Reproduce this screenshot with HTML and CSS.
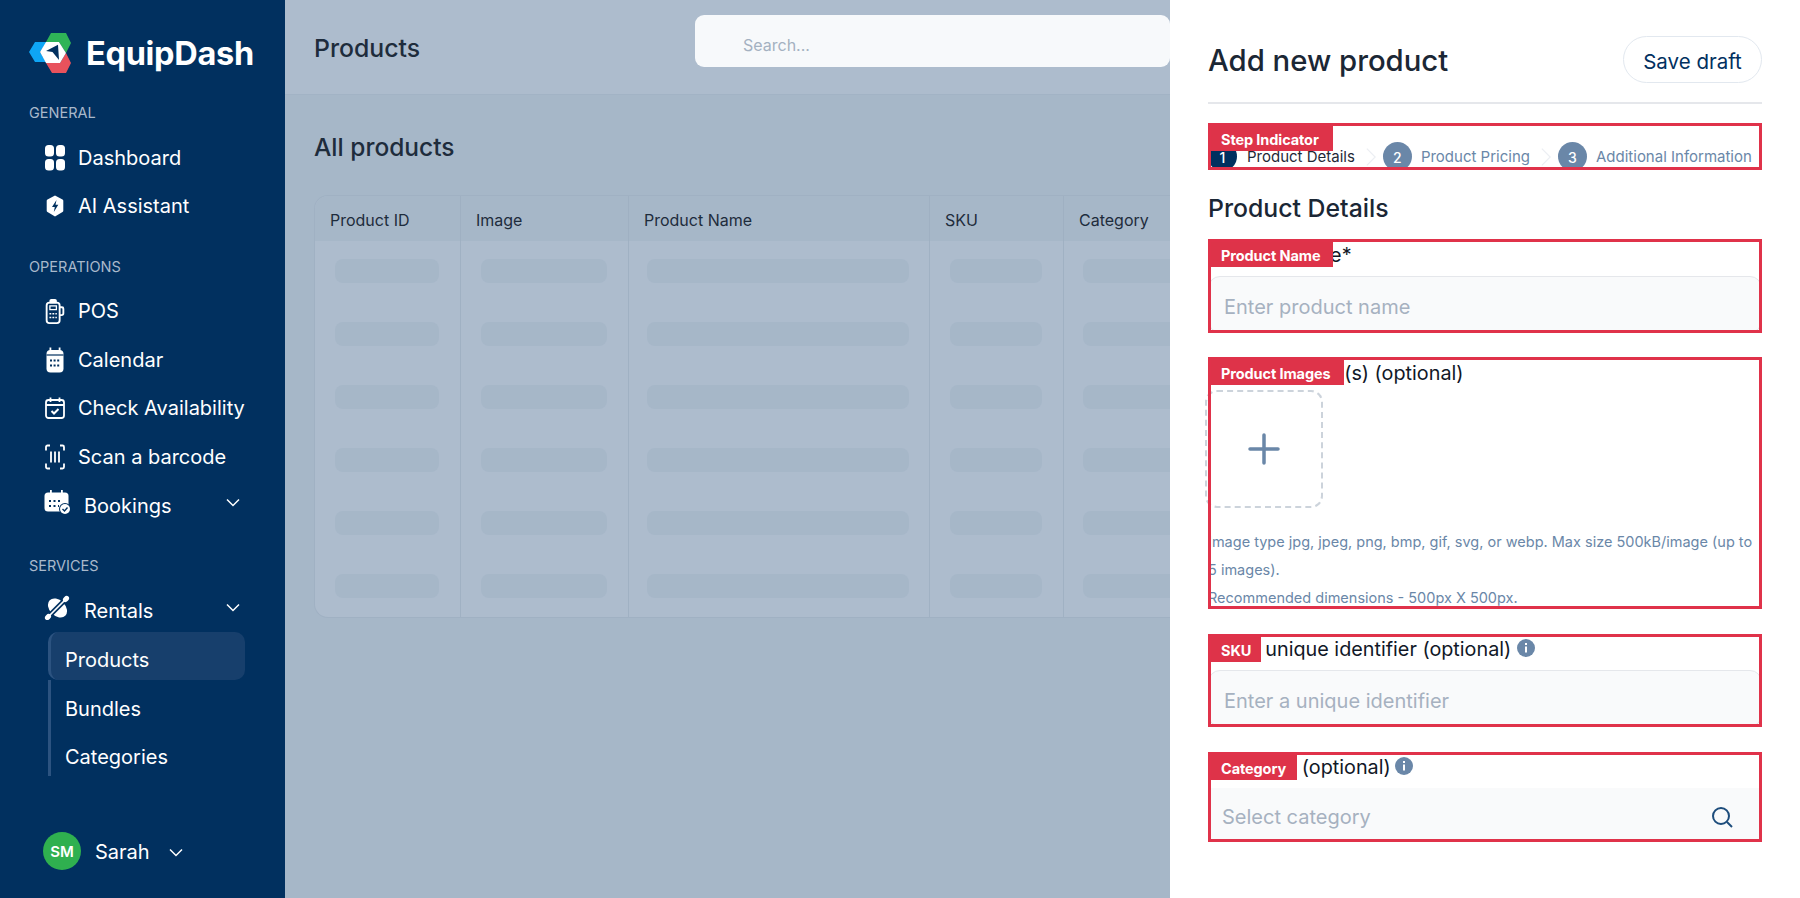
FILE: index.html
```html
<!DOCTYPE html>
<html lang="en">
<head>
<meta charset="utf-8">
<title>EquipDash - Add new product</title>
<link rel="stylesheet" href="styles.css">
</head>
<body>
<div class="app">
  <aside class="sidebar">
    <div class="brand">
      <svg class="logo" viewBox="29 32 42 42" width="42" height="42">
        <polygon fill="#0ea5f5" points="29,52 35,42 47,42 40,52 46,62 35,62"/>
        <polygon fill="#2fb457" points="51,33 66,33 71,43 66,53 59,42 46,42"/>
        <polygon fill="#e8525c" points="66,53 71,63 66,73 52,73 46,63 60,63"/>
        <polygon fill="#ffffff" points="40,52 46,42 59,42 66,53 60,63 46,63"/>
        <polygon fill="#01305f" points="46,51 58,44.700 59,60 52.500,52"/>
      </svg>
      <span class="brand-name">EquipDash</span>
    </div>

    <div class="nav-heading first">GENERAL</div>
    <a class="nav-item">
      <svg class="nav-icon" viewBox="0 0 20 26"><rect x="0" y="0" width="9" height="11.5" rx="3.5" fill="#fff"/><rect x="11" y="0" width="9" height="11.5" rx="3.5" fill="#fff"/><rect x="0" y="14" width="9" height="11.5" rx="3.5" fill="#fff"/><rect x="11" y="14" width="9" height="11.5" rx="3.5" fill="#fff"/></svg>
      <span>Dashboard</span>
    </a>
    <a class="nav-item">
      <svg class="nav-icon" viewBox="0 0 20 24"><path fill="#fff" d="M10 1.5 17.5 5.500a1.500 1.500 0 0 1 .8 1.300v10a1.500 1.500 0 0 1-.8 1.300L10 22.500 2.500 18.100a1.500 1.500 0 0 1-.8-1.300v-10a1.500 1.500 0 0 1 .8-1.300Z"/><path fill="#01305f" d="M11.500 6 7 13h2.800L8.800 18 13.300 10.800h-2.800Z"/></svg>
      <span>AI Assistant</span>
    </a>

    <div class="nav-heading">OPERATIONS</div>
    <div class="nav-list">
      <a class="nav-item">
        <svg class="nav-icon" viewBox="0 0 20 28" fill="none" stroke="#fff" stroke-width="2"><rect x="1" y="5" width="14" height="22" rx="3"/><path d="M15 10h2.500a1.500 1.500 0 0 1 1.500 1.500v5a2 2 0 0 1-2 2h-2"/><path fill="#fff" stroke="none" d="M4 6V3a2 2 0 0 1 2-2h4a2 2 0 0 1 2 2v3Z"/><rect x="4.500" y="8.500" width="7" height="4" stroke-width="1.400"/><path stroke-width="1.800" stroke-dasharray="2 1.200" d="M4 17h8M4 21h8"/></svg>
        <span>POS</span>
      </a>
      <a class="nav-item">
        <svg class="nav-icon" viewBox="0 0 20 26"><rect x="1.500" y="3" width="17" height="22.500" rx="4" fill="#fff"/><rect x="4.500" y="0.500" width="1.800" height="5" fill="#fff"/><rect x="13.700" y="0.500" width="1.800" height="5" fill="#fff"/><path stroke="#01305f" stroke-width="1.200" d="M1.500 8h17"/><path stroke="#01305f" stroke-width="2" stroke-dasharray="2 1.600" d="M5 13.500h10M5 18.500h10"/></svg>
        <span>Calendar</span>
      </a>
      <a class="nav-item">
        <svg class="nav-icon" viewBox="0 0 20 22" fill="none" stroke="#fff" stroke-width="1.800"><rect x="1" y="3" width="18" height="18" rx="2.500"/><path d="M1 8h18M5.500 0.500v4.500M14.500 0.500v4.500"/><path stroke-width="2" d="m6.500 14 2.500 2.500 4.500-4.500"/></svg>
        <span>Check Availability</span>
      </a>
      <a class="nav-item">
        <svg class="nav-icon" viewBox="0 0 20 25" fill="none" stroke="#fff" stroke-width="1.800"><path d="M5 1H2.500A1.500 1.500 0 0 0 1 2.500V6M15 1h2.500A1.500 1.500 0 0 1 19 2.500V6M5 24H2.500A1.500 1.500 0 0 1 1 22.500V19M15 24h2.500a1.500 1.500 0 0 0 1.500-1.500V19M6 7v11M10 7v11M14 7v11"/></svg>
        <span>Scan a barcode</span>
      </a>
      <a class="nav-item wide">
        <svg class="nav-icon-lg" viewBox="0 0 27 25"><rect x="0.500" y="2.500" width="24" height="19" rx="3.500" fill="#fff"/><rect x="6" y="0" width="1.800" height="4" fill="#fff"/><rect x="17" y="0" width="1.800" height="4" fill="#fff"/><path stroke="#01305f" stroke-width="2" stroke-dasharray="2 2.500" d="M5 11h13M5 16h10"/><circle cx="21" cy="19" r="6" fill="#01305f"/><circle cx="21" cy="19" r="5" fill="#fff"/><path fill="none" stroke="#01305f" stroke-width="1.400" d="m18.500 19 2 2 3-3.500"/></svg>
        <span>Bookings</span>
        <svg class="chev" viewBox="0 0 14 9"><path d="M1 1.500 7 7.500l6-6"/></svg>
      </a>
    </div>

    <div class="nav-heading services">SERVICES</div>
    <a class="nav-item wide rentals">
      <svg class="nav-icon-lg" viewBox="0 0 27 25"><ellipse cx="13.500" cy="13" rx="11" ry="7.800" transform="rotate(45 13.500 13)" fill="#fff"/><path stroke="#01305f" stroke-width="5" d="M3 23 23 3"/><path stroke="#fff" stroke-width="1.700" d="M3 23 23 3"/><ellipse cx="4" cy="22" rx="2.600" ry="3.400" transform="rotate(45 4 22)" fill="#fff"/><ellipse cx="22" cy="4" rx="2.600" ry="3.400" transform="rotate(45 22 4)" fill="#fff"/></svg>
      <span>Rentals</span>
      <svg class="chev" viewBox="0 0 14 9"><path d="M1 1.500 7 7.500l6-6"/></svg>
    </a>
    <div class="subnav">
      <a class="sub-item active">Products</a>
      <a class="sub-item">Bundles</a>
      <a class="sub-item">Categories</a>
    </div>

    <div class="user">
      <span class="avatar">SM</span>
      <span class="user-name">Sarah</span>
      <svg class="chev small" viewBox="0 0 14 9"><path d="M1 1.500 7 7.500l6-6"/></svg>
    </div>
  </aside>

  <main class="main">
    <header class="topbar">
      <h1 class="page-title">Products</h1>
      <div class="search">Search...</div>
    </header>
    <section class="content">
      <h2 class="section-title">All products</h2>
      <div class="table">
        <div class="th">Product ID</div><div class="th">Image</div><div class="th">Product Name</div><div class="th">SKU</div><div class="th">Category</div>
        <div class="td"><i class="sk"></i></div><div class="td"><i class="sk"></i></div><div class="td"><i class="sk"></i></div><div class="td"><i class="sk"></i></div><div class="td"><i class="sk"></i></div>
        <div class="td"><i class="sk"></i></div><div class="td"><i class="sk"></i></div><div class="td"><i class="sk"></i></div><div class="td"><i class="sk"></i></div><div class="td"><i class="sk"></i></div>
        <div class="td"><i class="sk"></i></div><div class="td"><i class="sk"></i></div><div class="td"><i class="sk"></i></div><div class="td"><i class="sk"></i></div><div class="td"><i class="sk"></i></div>
        <div class="td"><i class="sk"></i></div><div class="td"><i class="sk"></i></div><div class="td"><i class="sk"></i></div><div class="td"><i class="sk"></i></div><div class="td"><i class="sk"></i></div>
        <div class="td"><i class="sk"></i></div><div class="td"><i class="sk"></i></div><div class="td"><i class="sk"></i></div><div class="td"><i class="sk"></i></div><div class="td"><i class="sk"></i></div>
        <div class="td"><i class="sk"></i></div><div class="td"><i class="sk"></i></div><div class="td"><i class="sk"></i></div><div class="td"><i class="sk"></i></div><div class="td"><i class="sk"></i></div>
      </div>
    </section>
  </main>

  <aside class="panel">
    <div class="panel-head">
      <h2 class="panel-title">Add new product</h2>
      <button class="draft">Save draft</button>
    </div>

    <div class="annot steps-box">
      <div class="steps">
        <span class="step-num current">1</span><span class="step-text current">Product Details</span>
        <svg class="step-sep" viewBox="0 0 12 22"><path d="M1 1l10 10L1 21"/></svg>
        <span class="step-num">2</span><span class="step-text">Product Pricing</span>
        <svg class="step-sep" viewBox="0 0 12 22"><path d="M1 1l10 10L1 21"/></svg>
        <span class="step-num">3</span><span class="step-text">Additional Information</span>
      </div>
      <span class="tag tag-step">Step Indicator</span>
    </div>

    <h3 class="form-title">Product Details</h3>

    <div class="annot name-box">
      <div class="field-label">Product Name*</div>
      <div class="input">Enter product name</div>
      <span class="tag tag-name">Product Name</span>
    </div>

    <div class="annot images-box">
      <div class="field-label">Product Image(s) (optional)</div>
      <div class="upload">
        <svg class="plus" viewBox="0 0 32 32"><path d="M16 2v28M2 16h28"/></svg>
      </div>
      <p class="hint">Image type jpg, jpeg, png, bmp, gif, svg, or webp. Max size 500kB/image (up to<br>5 images).<br>Recommended dimensions - 500px X 500px.</p>
      <span class="tag tag-images">Product Images</span>
    </div>

    <div class="annot sku-box">
      <div class="field-label">SKU unique identifier (optional)
        <svg class="info" viewBox="0 0 18 18"><circle cx="9" cy="9" r="9" fill="#6a87a8"/><rect x="8" y="7.500" width="2" height="6" fill="#fff"/><rect x="8" y="4" width="2" height="2" fill="#fff"/></svg>
      </div>
      <div class="input">Enter a unique identifier</div>
      <span class="tag tag-sku">SKU</span>
    </div>

    <div class="annot category-box">
      <div class="field-label">Category (optional)
        <svg class="info" viewBox="0 0 18 18"><circle cx="9" cy="9" r="9" fill="#6a87a8"/><rect x="8" y="7.500" width="2" height="6" fill="#fff"/><rect x="8" y="4" width="2" height="2" fill="#fff"/></svg>
      </div>
      <div class="select">
        <span>Select category</span>
        <svg class="search-icon" viewBox="0 0 22 22"><circle cx="10" cy="10" r="8"/><path d="m16 16 5 5"/></svg>
      </div>
      <span class="tag tag-category">Category</span>
    </div>
  </aside>
</div>
</body>
</html>
```
FILE: styles.css
```css
* { box-sizing: border-box; }
html, body { margin: 0; height: 100%; }
body { font-family: Inter, "Noto Sans", sans-serif; color: #1f2937; overflow: hidden; }
h1, h2, h3, p { margin: 0; font-weight: 500; }

.app { display: flex; width: 1800px; height: 898px; overflow: hidden; }

/* sidebar */
.sidebar { width: 285px; flex: none; background: #01305f; color: #fff; padding: 32px 0 28px 29px; display: flex; flex-direction: column; }
.brand { display: flex; align-items: center; height: 42px; gap: 15px; }
.logo { flex: none; }
.brand-name { font-size: 32.500px; font-weight: 700; letter-spacing: -0.3px; line-height: 42px; padding-top: 2px; }
.nav-heading { font-size: 14.500px; line-height: 20px; color: #a9b9cb; margin-top: 27px; }
.nav-heading.first { margin-top: 29px; margin-bottom: 11px; }
.nav-heading.services { margin-top: 26px; }
.nav-list { margin-top: 10px; }
.nav-item { display: flex; align-items: center; height: 48px; width: 228px; font-size: 20px; color: #fff; padding-left: 16px; position: relative; }
.nav-list .nav-item { height: 48.5px; }
.nav-item span { margin-left: 13px; }
.nav-icon { width: 20px; height: 26px; flex: none; }
.nav-icon-lg { width: 27px; height: 25px; flex: none; margin-left: -1px; margin-bottom: 6px; }
.nav-item.wide span { margin-left: 13px; padding-top: 1px; }
.chev { width: 14px; height: 9px; fill: none; stroke: #fff; stroke-width: 1.500; flex: none; }
.nav-item .chev { margin-left: auto; margin-bottom: 6px; margin-right: 17px; }
.rentals { margin-top: 14px; height: 42px; }
.subnav { margin-left: 19px; width: 197px; }
.sub-item { display: block; height: 48px; padding: 17px 0 0 14px; font-size: 20px; line-height: 24px; border-left: 3px solid #2c5380; }
.sub-item.active { background: #173f6c; border-radius: 10px; padding-top: 16px; }
.user { margin-top: auto; display: flex; align-items: center; padding-left: 14px; }
.avatar { width: 38px; height: 38px; border-radius: 50%; background: #2fb04f; color: #fff; font-size: 15px; font-weight: 600; display: flex; align-items: center; justify-content: center; }
.user-name { margin-left: 14px; font-size: 20px; padding-top: 2px; }
.chev.small { margin-left: 19px; margin-top: 3px; }

/* main */
.main { flex: none; width: 885px; background: #a6b7c8; overflow: hidden; }
.topbar { height: 95px; background: #adbccd; border-bottom: 1px solid #a2b3c5; display: flex; padding-left: 29px; align-items: center; }
.page-title { font-size: 24.800px; color: #1e2c3c; padding-top: 2px; }
.search { margin-left: auto; align-self: flex-start; margin-top: 15px; width: 475px; height: 52px; background: #f7f9fb; border-radius: 9px; padding: 20px 0 0 48px; font-size: 16px; line-height: 20px; color: #a4b1c1; }
.content { padding: 37px 0 0 29px; }
.section-title { font-size: 24.500px; line-height: 30px; color: #1e2c3c; }
.table { margin-top: 33px; width: 950px; height: 423px; display: grid; grid-template-columns: 146px 168px 301px 134px 201px; grid-template-rows: 45px repeat(6, 63px); border: 1px solid #a0b1c3; border-right: 0; border-radius: 14px 0 0 14px; overflow: hidden; background: #adbccd; }
.th { background: #a6b7c8; padding: 2px 0 0 15px; display: flex; align-items: center; font-size: 16px; color: #1e2c3c; border-right: 1px solid #9fb0c2; }
.td { display: flex; align-items: center; padding: 0 21px 3px 20px; border-right: 1px solid #a0b1c3; }
.td:nth-child(5n+2) { padding: 0 21px 3px 20px; }
.td:nth-child(5n+3) { padding: 0 20px 3px 18px; }
.td:nth-child(5n+4) { padding: 0 21px 3px 20px; }
.td:nth-child(5n) { padding: 0 19px 3px 19px; }
.sk { display: block; width: 100%; height: 24px; border-radius: 8px; background: #a6b7c8; }

/* panel */
.panel { flex: none; width: 630px; background: #fff; padding: 36px 38px 0; }
.panel-head { display: flex; align-items: center; justify-content: space-between; height: 47px; position: relative; }
.panel-head::after { content: ""; position: absolute; left: 0; right: 0; top: 66px; border-top: 2px solid #e5e7eb; }
.panel-title { font-size: 29.300px; color: #1b2735; padding-top: 1px; }
.draft { width: 139px; height: 47px; border: 1px solid #e2e8ef; border-radius: 24px; background: #fff; font: 400 20.500px Inter, sans-serif; color: #01305f; padding: 4px 0 0; }
.annot { position: relative; margin-top: 25px; }
.annot::after { content: ""; position: absolute; inset: 0; border: 3px solid #e0324a; pointer-events: none; }
.tag { position: absolute; left: 3px; top: 3px; height: 25px; background: #de3349; color: #fff; font-size: 14.500px; font-weight: 700; line-height: 27px; padding-left: 10px; z-index: 1; white-space: nowrap; overflow: hidden; letter-spacing: -0.1px; }
.tag-step, .tag-name { width: 122px; }
.tag-images { width: 133px; }
.tag-sku { width: 50px; }
.tag-category { width: 86px; }

.steps-box { height: 47px; margin-top: 40px; overflow: hidden; }
.steps { display: flex; align-items: center; padding-top: 19px; height: 48px; }
.step-num { width: 29px; height: 29px; border-radius: 50%; background: #6a87a8; color: #fff; display: flex; align-items: center; justify-content: center; font-size: 14px; padding-top: 2px; flex: none; font-weight: 500; }
.step-num.current { background: #01305f; }
.step-text { font-size: 15px; color: #6a87a8; margin-left: 9px; white-space: nowrap; }
.step-text.current { color: #1f2937; margin-left: 10px; }
.step-sep { width: 10px; height: 22px; fill: none; stroke: #eceff3; stroke-width: 1.500; margin: 0 7px 0 11px; flex: none; }
.form-title { font-size: 24.800px; line-height: 30px; color: #1b2735; margin-top: 23px; }
.name-box { height: 94px; margin-top: 16px; }
.images-box { height: 252px; margin-top: 24px; }
.sku-box { height: 93px; }
.category-box { height: 90px; }
.field-label { height: 32px; padding-top: 4px; font-size: 19.800px; line-height: 24px; color: #111827; display: flex; align-items: center; gap: 6px; white-space: nowrap; padding-bottom: 4px; }
.name-box .field-label { height: 37px; padding-bottom: 9px; }
.sku-box .field-label { height: 36px; padding: 3px 0 9px 11px; }
.category-box .field-label { height: 36px; padding: 3px 0 9px 2px; gap: 4px; }
.input { height: 57px; background: #f9fafb; border: 1px solid #e5e7eb; border-radius: 12px; padding-left: 15px; display: flex; align-items: center; font-size: 20px; color: #a6b1c0; padding-top: 4px; }
.select { height: 54px; background: #f9fafb; display: flex; align-items: center; justify-content: space-between; padding: 4px 29px 0 14px; font-size: 20px; color: #a6b1c0; }
.upload { margin: 1px 0 0 -3px; width: 118px; height: 118px; border: 2px dashed #ccd3db; border-radius: 12px; display: flex; align-items: center; justify-content: center; background: #fff; }
.plus { width: 32px; height: 32px; fill: none; stroke: #6a87a8; stroke-width: 3.500; stroke-linecap: round; }
.hint { margin-top: 20px; font-size: 14.500px; line-height: 28px; color: #6a87a8; font-weight: 400; white-space: nowrap; }
.info { width: 18px; height: 18px; flex: none; margin-top: -2px; }
.search-icon { width: 22px; height: 22px; fill: none; stroke: #1e4d7c; stroke-width: 2; }
```
